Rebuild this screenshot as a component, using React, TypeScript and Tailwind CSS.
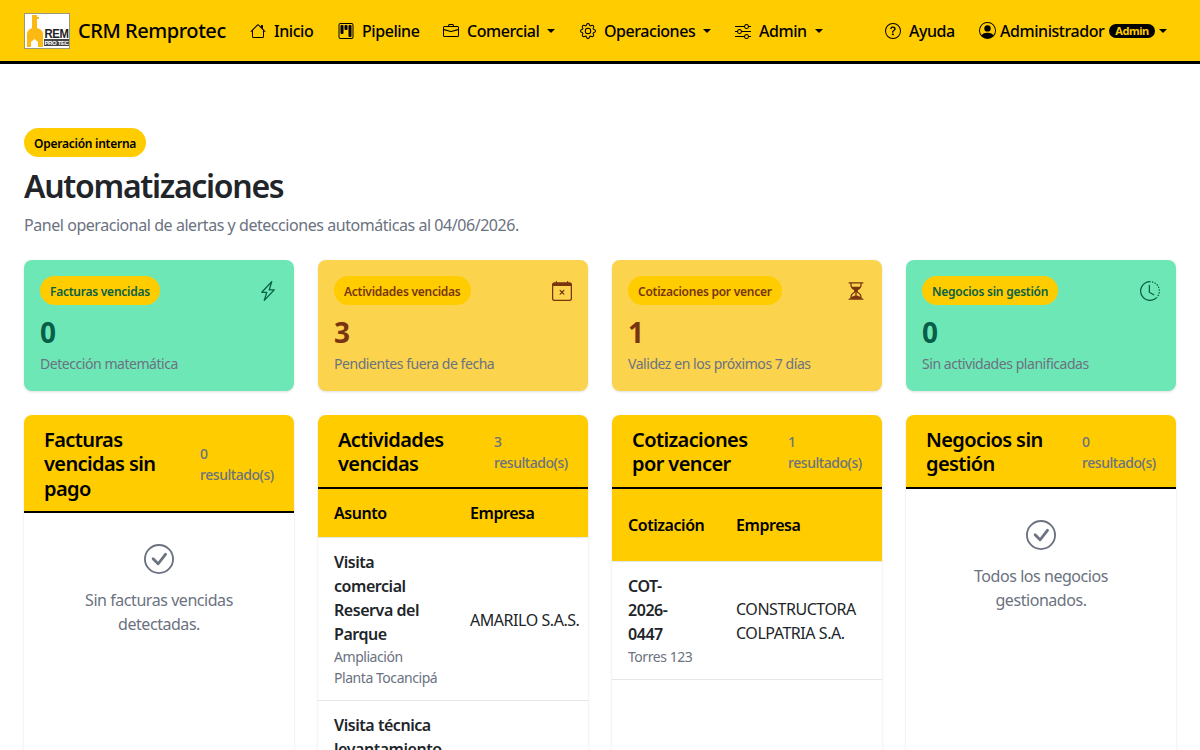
import type { ReactNode } from "react";
import {
  BsBriefcase,
  BsCalendarX,
  BsCheckCircle,
  BsClockHistory,
  BsGear,
  BsHourglassSplit,
  BsHouse,
  BsKanban,
  BsLightningCharge,
  BsPersonCircle,
  BsQuestionCircle,
  BsSliders,
} from "react-icons/bs";

function Caret() {
  return <span className="h-0 w-0 border-x-[4.5px] border-t-[4.5px] border-x-transparent border-t-black" />;
}

function NavItem({ icon, label, caret, className }: { icon: ReactNode; label: string; caret?: boolean; className: string }) {
  return (
    <a className={`flex items-center gap-2 text-black font-medium ${className}`}>
      {icon}
      <span>{label}</span>
      {caret && <Caret />}
    </a>
  );
}

function Logo() {
  return (
    <div className="h-[36px] w-[46px] shrink-0 border border-[#9a9a7a] bg-white">
      <svg viewBox="0 0 44 34" className="h-full w-full">
        <path d="M7 1h5v2h2v2h-2v9c4 1 6 3 6 6v13H2V20c0-3 2-5 5-6z" fill="#fdb913" />
        <path d="M6 33v-5l3.5-3 3.5 3v5z" fill="#fff" />
        <text x="19.5" y="24" fontSize="12" fontWeight="800" fill="#222" fontFamily="Liberation Sans, sans-serif" textLength="24" lengthAdjust="spacingAndGlyphs">REM</text>
        <rect x="19" y="25" width="25" height="7" fill="#444" />
        <text x="19.5" y="31" fontSize="6" fontWeight="700" fill="#fff" fontFamily="Liberation Sans, sans-serif" textLength="24" lengthAdjust="spacingAndGlyphs">PRO TEC</text>
      </svg>
    </div>
  );
}

function Navbar() {
  return (
    <nav className="flex h-[64px] items-center border-b-[3px] border-black bg-[#ffcc00] pl-6 pr-6 text-[16px]">
      <Logo />
      <span className="ml-2 w-[172px] text-[20px] font-medium text-black">CRM Remprotec</span>
      <NavItem className="w-[88px]" icon={<BsHouse size={16} />} label="Inicio" />
      <NavItem className="w-[105px]" icon={<BsKanban size={16} />} label="Pipeline" />
      <NavItem className="w-[137px]" caret icon={<BsBriefcase size={16} />} label="Comercial" />
      <NavItem className="w-[155px]" caret icon={<BsGear size={16} />} label="Operaciones" />
      <NavItem className="w-[150px]" caret icon={<BsSliders size={16} />} label="Admin" />
      <NavItem className="w-[94px]" icon={<BsQuestionCircle size={16} />} label="Ayuda" />
      <a className="flex items-center font-medium text-black">
        <BsPersonCircle size={17} className="mr-1" />
        <span>Administrador</span>
        <span className="ml-[5px] rounded-full bg-black px-[6px] text-[11px] leading-[14px] font-bold text-[#ffcc00]">Admin</span>
        <span className="ml-1 h-0 w-0 border-x-[4.5px] border-t-[4.5px] border-x-transparent border-t-black" />
      </a>
    </nav>
  );
}

type Stat = { badge: string; value: string; text: string; icon: ReactNode; tone: "green" | "amber" };

const stats: Stat[] = [
  { badge: "Facturas vencidas", value: "0", text: "Detección matemática", icon: <BsLightningCharge size={20} />, tone: "green" },
  { badge: "Actividades vencidas", value: "3", text: "Pendientes fuera de fecha", icon: <BsCalendarX size={20} />, tone: "amber" },
  { badge: "Cotizaciones por vencer", value: "1", text: "Validez en los próximos 7 días", icon: <BsHourglassSplit size={20} />, tone: "amber" },
  { badge: "Negocios sin gestión", value: "0", text: "Sin actividades planificadas", icon: <BsClockHistory size={20} />, tone: "green" },
];

function StatCard({ stat }: { stat: Stat }) {
  const green = stat.tone === "green";
  return (
    <div className={`h-[131px] rounded-lg p-4 shadow-sm ${green ? "bg-[#6ee7b7] text-[#065f46]" : "bg-[#fcd34d] text-[#78350f]"}`}>
      <div className="flex items-center justify-between">
        <span className="rounded-full bg-[#ffcc00] px-[10px] pt-[7px] pb-[5px] text-[12px] leading-[17px] font-semibold tracking-[-0.25px]">{stat.badge}</span>
        {stat.icon}
      </div>
      <div className="mt-[6px] text-[28px] leading-[42px] font-bold">{stat.value}</div>
      <div className="text-[14px] leading-[21px] text-[#6b7280]">{stat.text}</div>
    </div>
  );
}

function Panel({ title, count, children }: { title: string; count: string; children: ReactNode }) {
  return (
    <section className="overflow-hidden rounded-lg bg-white shadow-sm">
      <header className="flex items-center justify-between border-b-2 border-black bg-[#ffcc00] pt-[13px] pr-5 pb-[10px] pl-5">
        <h2 className="w-[156px] pr-4 text-[20px] leading-[24.3px] font-semibold tracking-[-0.6px] text-black">{title}</h2>
        <span className="w-[74px] shrink-0 text-[14px] leading-[21px] font-medium text-[#6b7280]">
          {count}
          <br />
          resultado(s)
        </span>
      </header>
      {children}
    </section>
  );
}

function Empty({ text }: { text: string }) {
  return (
    <div className="flex flex-col items-center px-[50px] pt-[31px] pb-8 text-center text-[#6b7280]">
      <BsCheckCircle size={30} />
      <p className="mt-[14px] text-[16px] leading-[24px]">{text}</p>
    </div>
  );
}

export default function App() {
  return (
    <div className="h-[750px] overflow-hidden bg-white font-['Noto_Sans',sans-serif] tracking-[-0.45px] text-[#212529]">
      <Navbar />
      <main className="px-6 pt-[64px]">
        <span className="inline-block rounded-full bg-[#ffcc00] px-[10px] pt-[7px] pb-[5px] text-[12px] leading-[17px] font-semibold tracking-[-0.25px] text-black">Operación interna</span>
        <h1 className="mt-[7px] text-[32px] leading-[44px] font-semibold tracking-[-1.3px]">Automatizaciones</h1>
        <p className="mt-[5px] text-[16px] leading-[24px] text-[#6b7280]">Panel operacional de alertas y detecciones automáticas al 04/06/2026.</p>

        <div className="mt-[23px] grid grid-cols-4 gap-6">
          {stats.map((s) => (
            <StatCard key={s.badge} stat={s} />
          ))}
        </div>

        <div className="mt-6 grid h-[500px] grid-cols-4 gap-6">
          <Panel title="Facturas vencidas sin pago" count="0">
            <Empty text="Sin facturas vencidas detectadas." />
          </Panel>

          <Panel title="Actividades vencidas" count="3">
            <div className="flex h-[49px] items-center border-b border-[#e5e7eb] bg-[#ffcc00] px-4 font-semibold text-black">
              <span className="w-[136px]">Asunto</span>
              <span>Empresa</span>
            </div>
            <div className="flex items-center border-b border-[#e5e7eb] px-4 py-3">
              <div className="w-[136px] shrink-0 pr-7">
                <div className="leading-[24px] font-semibold">Visita comercial Reserva del Parque</div>
                <div className="text-[14px] leading-[21px] text-[#6b7280]">Ampliación Planta Tocancipá</div>
              </div>
              <span className="pt-[2px] whitespace-nowrap">AMARILO S.A.S.</span>
            </div>
            <div className="px-4 py-3">
              <div className="w-[108px] leading-[24px] font-semibold">Visita técnica levantamiento</div>
            </div>
          </Panel>

          <Panel title="Cotizaciones por vencer" count="1">
            <div className="flex h-[73px] items-center border-b border-[#e5e7eb] bg-[#ffcc00] px-4 font-semibold text-black">
              <span className="w-[108px]">Cotización</span>
              <span>Empresa</span>
            </div>
            <div className="flex items-center border-b border-[#e5e7eb] px-4 py-3">
              <div className="w-[108px] shrink-0 pr-9">
                <div className="leading-[24px] font-semibold">COT-2026-0447</div>
                <div className="text-[14px] leading-[21px] text-[#6b7280]">Torres 123</div>
              </div>
              <span className="pt-[2px] leading-[24px]">CONSTRUCTORA COLPATRIA S.A.</span>
            </div>
          </Panel>

          <Panel title="Negocios sin gestión" count="0">
            <Empty text="Todos los negocios gestionados." />
          </Panel>
        </div>
      </main>
    </div>
  );
}
